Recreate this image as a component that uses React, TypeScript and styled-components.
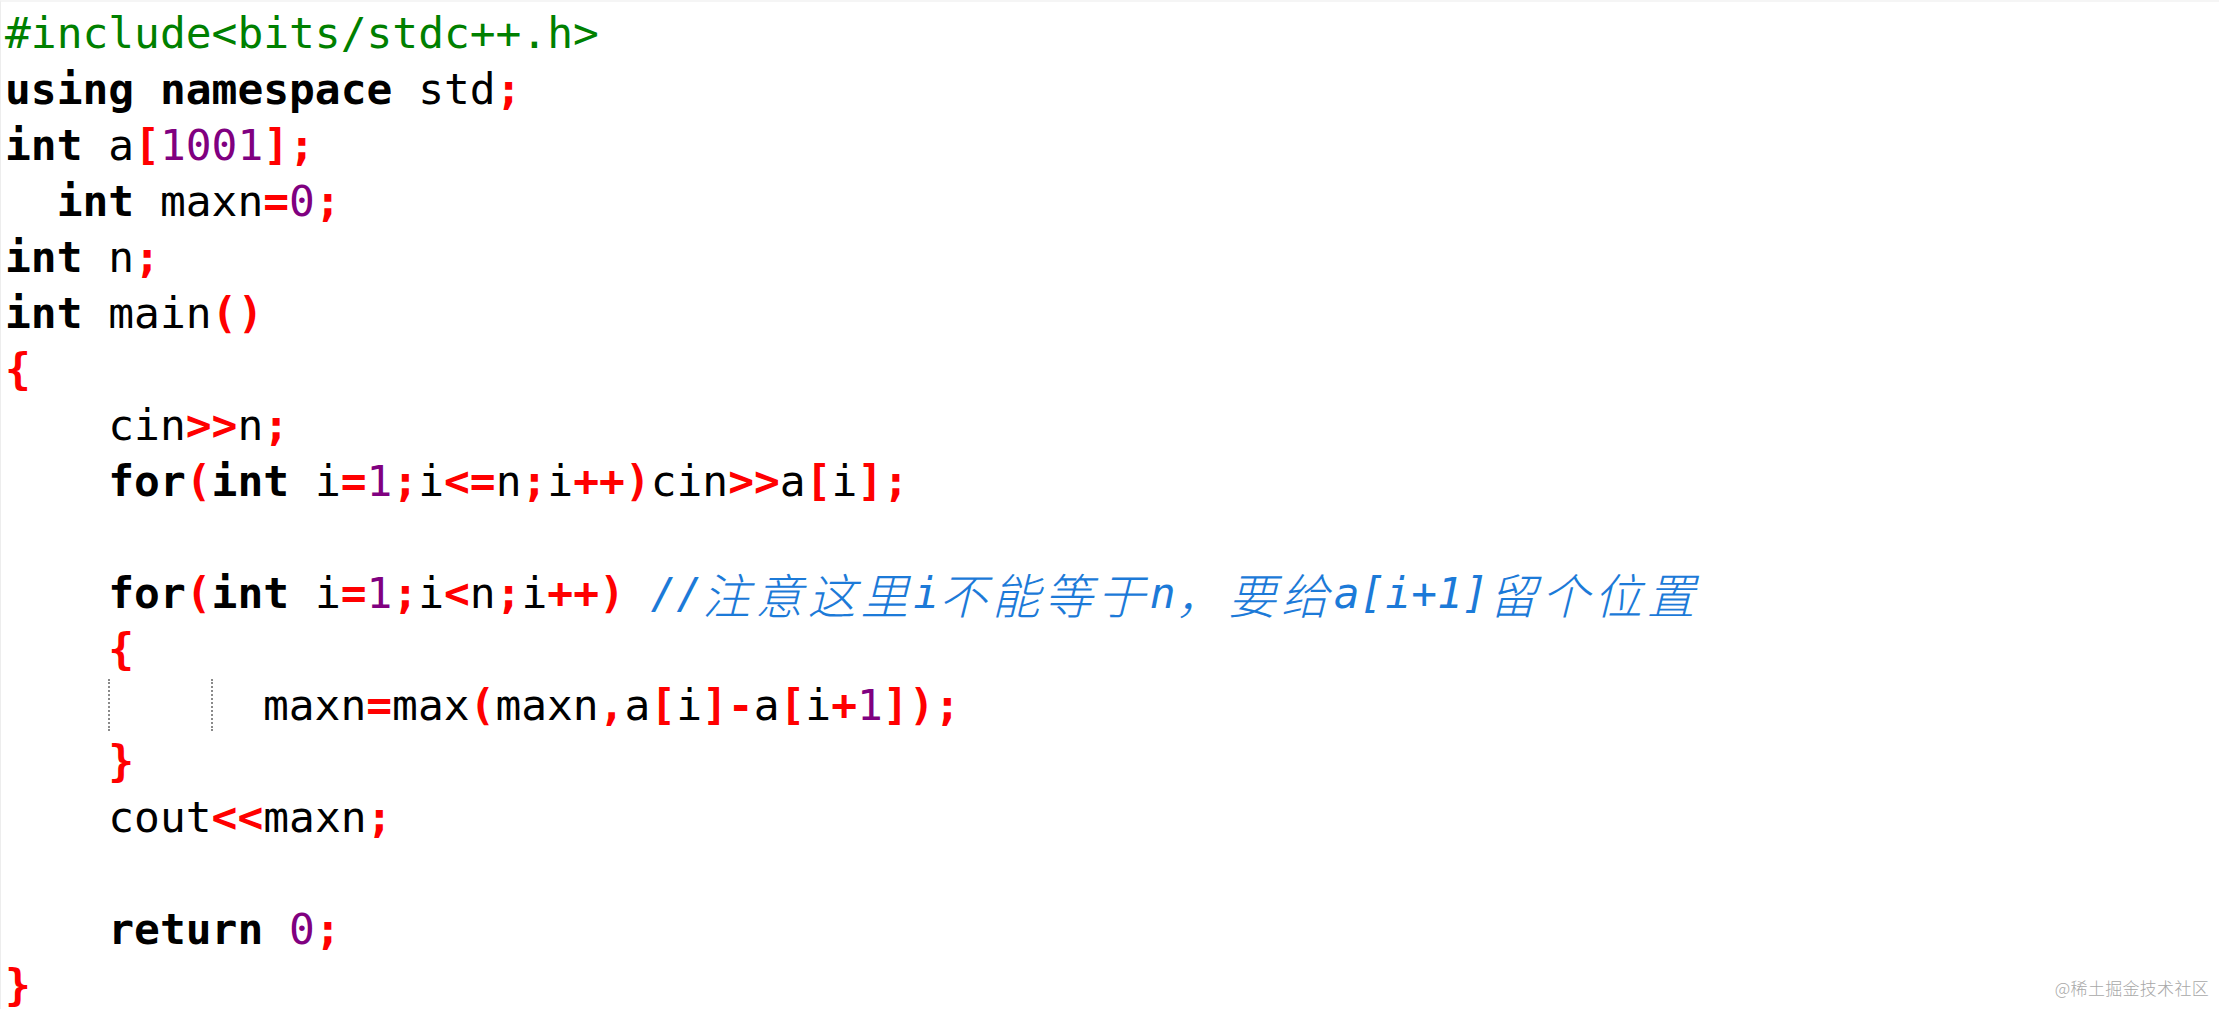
import React from "react";
import styled, { createGlobalStyle } from "styled-components";

const CW = 25.8;
const CJK_SIZE = 48;
const CJK_ADV = 52.7;

const Global = createGlobalStyle`
  html, body { margin: 0; padding: 0; background: #ffffff; }
  #root { min-height: 1009px; }
`;

const Page = styled.div`
  position: relative;
  width: 2219px;
  height: 1009px;
  box-sizing: border-box;
  padding: 3px 0 0 4px;
  background: #ffffff;
  border-left: 1px solid #ededed;
  border-top: 2px solid #f5f5f5;
  overflow: hidden;
`;

const Code = styled.div`
  display: flex;
  flex-direction: column;
  font-family: "DejaVu Sans Mono", "Liberation Mono", monospace;
  font-size: 42.9px;
  color: #000000;
`;

const Line = styled.div`
  height: 56px;
  line-height: 56px;
  white-space: pre;
  display: flex;
  align-items: stretch;
`;

type Kind = "kw" | "id" | "op" | "num" | "pre" | "cm" | "cjk";

const Tok = styled.span<{ $k: Kind }>`
  white-space: pre;
  font-weight: ${(p) => (p.$k === "kw" || p.$k === "op" ? 700 : 400)};
  color: ${(p) =>
    p.$k === "op"
      ? "#ff0000"
      : p.$k === "num"
      ? "#800080"
      : p.$k === "pre"
      ? "#008000"
      : p.$k === "cm" || p.$k === "cjk"
      ? "#1c7ad8"
      : "#000000"};
  font-style: ${(p) => (p.$k === "cm" || p.$k === "cjk" ? "italic" : "normal")};
  ${(p) =>
    p.$k === "cjk"
      ? `font-family: "Noto Sans CJK SC", sans-serif; font-size: ${CJK_SIZE}px; letter-spacing: ${
          CJK_ADV - CJK_SIZE
        }px; font-weight: 300;`
      : ""}
`;

const Guide = styled.span<{ $cols: number }>`
  display: inline-block;
  width: ${(p) => p.$cols * CW}px;
  height: 52px;
  align-self: center;
  border-left: 2px dotted #8a8a8a;
  box-sizing: border-box;
`;

const Spacer = styled.span<{ $cols: number }>`
  display: inline-block;
  width: ${(p) => p.$cols * CW}px;
`;

const Watermark = styled.div`
  position: absolute;
  right: 10px;
  bottom: 9px;
  font-family: "Noto Sans CJK SC", sans-serif;
  font-size: 17px;
  font-weight: 300;
  color: #a8a8a8;
  letter-spacing: 0.3px;
`;

type T = [Kind, string];

const k = (s: string): T => ["kw", s];
const i = (s: string): T => ["id", s];
const o = (s: string): T => ["op", s];
const n = (s: string): T => ["num", s];

const lines: { guides?: boolean; toks: T[] }[] = [
  { toks: [["pre", "#include<bits/stdc++.h>"]] },
  { toks: [k("using namespace"), i(" std"), o(";")] },
  { toks: [k("int"), i(" a"), o("["), n("1001"), o("]"), o(";")] },
  { toks: [i("  "), k("int"), i(" maxn"), o("="), n("0"), o(";")] },
  { toks: [k("int"), i(" n"), o(";")] },
  { toks: [k("int"), i(" main"), o("()")] },
  { toks: [o("{")] },
  { toks: [i("    cin"), o(">>"), i("n"), o(";")] },
  {
    toks: [
      i("    "),
      k("for"),
      o("("),
      k("int"),
      i(" i"),
      o("="),
      n("1"),
      o(";"),
      i("i"),
      o("<="),
      i("n"),
      o(";"),
      i("i"),
      o("++"),
      o(")"),
      i("cin"),
      o(">>"),
      i("a"),
      o("["),
      i("i"),
      o("]"),
      o(";"),
    ],
  },
  { toks: [] },
  {
    toks: [
      i("    "),
      k("for"),
      o("("),
      k("int"),
      i(" i"),
      o("="),
      n("1"),
      o(";"),
      i("i"),
      o("<"),
      i("n"),
      o(";"),
      i("i"),
      o("++"),
      o(")"),
      i(" "),
      ["cm", "//"],
      ["cjk", "注意这里"],
      ["cm", "i"],
      ["cjk", "不能等于"],
      ["cm", "n"],
      ["cjk", "，要给"],
      ["cm", "a[i+1]"],
      ["cjk", "留个位置"],
    ],
  },
  { toks: [i("    "), o("{")] },
  {
    guides: true,
    toks: [
      i("maxn"),
      o("="),
      i("max"),
      o("("),
      i("maxn"),
      o(","),
      i("a"),
      o("["),
      i("i"),
      o("]"),
      o("-"),
      i("a"),
      o("["),
      i("i"),
      o("+"),
      n("1"),
      o("]"),
      o(")"),
      o(";"),
    ],
  },
  { toks: [i("    "), o("}")] },
  { toks: [i("    cout"), o("<<"), i("maxn"), o(";")] },
  { toks: [] },
  { toks: [i("    "), k("return"), i(" "), n("0"), o(";")] },
  { toks: [o("}")] },
];

export default function App() {
  return (
    <>
      <Global />
      <Page>
        <Code>
          {lines.map((ln, li) => (
            <Line key={li}>
              {ln.guides && (
                <>
                  <Spacer $cols={4} />
                  <Guide $cols={4} />
                  <Guide $cols={2} />
                </>
              )}
              {ln.toks.length === 0 ? " " : null}
              {ln.toks.map(([kind, text], ti) => (
                <Tok key={ti} $k={kind}>
                  {text}
                </Tok>
              ))}
            </Line>
          ))}
        </Code>
        <Watermark>@稀土掘金技术社区</Watermark>
      </Page>
    </>
  );
}
